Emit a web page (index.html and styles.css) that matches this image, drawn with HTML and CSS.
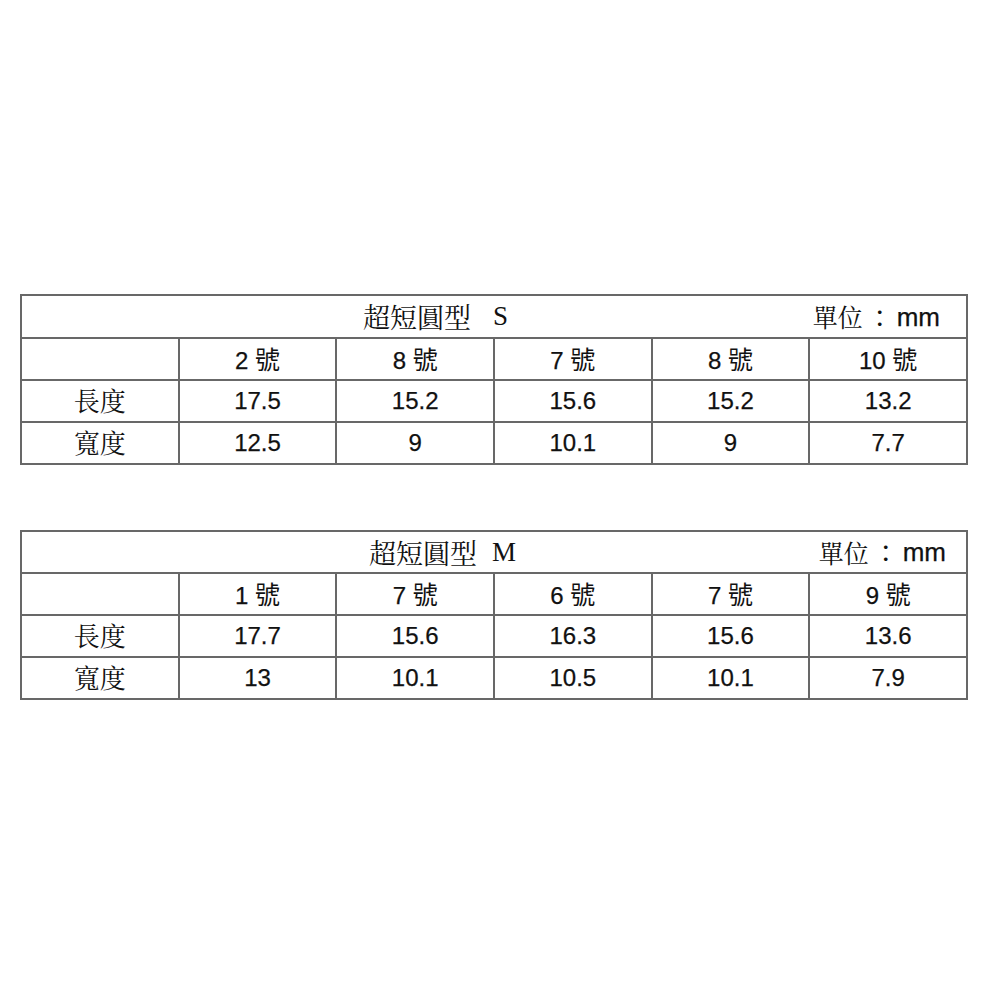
FILE: index.html
```html
<!DOCTYPE html>
<html lang="zh-Hant">
<head>
<meta charset="utf-8">
<title>超短圓型 尺寸表</title>
<link rel="stylesheet" href="styles.css">
</head>
<body>
<div class="page">
  <table class="spec">
    <tr class="title-row">
      <td colspan="6">
        <div class="title-bar title-bar-s">
          <span class="title"><span class="serif-cjk">超短圓型</span><span class="latin latin-s">S</span></span>
          <span class="unit"><span class="serif-cjk">單位</span><span class="colon">：</span><span class="mm">mm</span></span>
        </div>
      </td>
    </tr>
    <tr>
      <td></td>
      <td>2 <span class="hao">號</span></td>
      <td>8 <span class="hao">號</span></td>
      <td>7 <span class="hao">號</span></td>
      <td>8 <span class="hao">號</span></td>
      <td>10 <span class="hao">號</span></td>
    </tr>
    <tr>
      <td class="label"><span class="serif-cjk">長度</span></td>
      <td>17.5</td><td>15.2</td><td>15.6</td><td>15.2</td><td>13.2</td>
    </tr>
    <tr>
      <td class="label"><span class="serif-cjk">寬度</span></td>
      <td>12.5</td><td>9</td><td>10.1</td><td>9</td><td>7.7</td>
    </tr>
  </table>

  <table class="spec">
    <tr class="title-row title-row-m">
      <td colspan="6">
        <div class="title-bar title-bar-m">
          <span class="title"><span class="serif-cjk">超短圓型</span><span class="latin latin-m">M</span></span>
          <span class="unit"><span class="serif-cjk">單位</span><span class="colon">：</span><span class="mm">mm</span></span>
        </div>
      </td>
    </tr>
    <tr>
      <td></td>
      <td>1 <span class="hao">號</span></td>
      <td>7 <span class="hao">號</span></td>
      <td>6 <span class="hao">號</span></td>
      <td>7 <span class="hao">號</span></td>
      <td>9 <span class="hao">號</span></td>
    </tr>
    <tr>
      <td class="label"><span class="serif-cjk">長度</span></td>
      <td>17.7</td><td>15.6</td><td>16.3</td><td>15.6</td><td>13.6</td>
    </tr>
    <tr>
      <td class="label"><span class="serif-cjk">寬度</span></td>
      <td>13</td><td>10.1</td><td>10.5</td><td>10.1</td><td>7.9</td>
    </tr>
  </table>
</div>
</body>
</html>
```

FILE: styles.css
```css
html, body {
  margin: 0;
  padding: 0;
  background: #ffffff;
}

.page {
  padding: 294px 0 0 20px;
  display: flex;
  flex-direction: column;
  gap: 65px;
  font-family: "Liberation Sans", "Noto Sans CJK TC", sans-serif;
  color: #111111;
}

.spec {
  width: 948px;
  border-collapse: collapse;
  table-layout: fixed;
  font-size: 24px;
}

.spec tr {
  height: 42px;
}

.spec tr.title-row {
  height: 43px;
}

.spec tr.title-row-m {
  height: 42px;
}

.spec td {
  border: 2px solid #686868;
  padding: 0;
  text-align: center;
  vertical-align: middle;
  line-height: 1;
  white-space: nowrap;
  -webkit-text-stroke: 0.25px #111111;
}

.serif-cjk {
  font-family: "Noto Serif CJK TC", "Noto Serif CJK SC", "Noto Sans CJK TC", serif;
  font-size: 26px;
  font-weight: 400;
  -webkit-text-stroke: 0;
}

.hao {
  font-family: "Noto Sans CJK TC", sans-serif;
  font-size: 25px;
  -webkit-text-stroke: 0;
}

.title-bar {
  display: flex;
  align-items: center;
  text-align: left;
}

.title {
  display: flex;
  align-items: center;
}

.title .serif-cjk {
  font-size: 27px;
}

.latin {
  font-family: "Liberation Serif", serif;
  font-size: 27px;
  -webkit-text-stroke: 0;
}

.latin-s {
  margin-left: 22px;
}

.latin-m {
  margin-left: 15px;
}

.title-bar-s .title {
  margin-left: 341px;
}

.title-bar-m .title {
  margin-left: 347px;
}

.unit {
  margin-left: auto;
  display: flex;
  align-items: center;
}

.unit .serif-cjk {
  font-size: 25px;
}

.colon {
  font-family: "Noto Sans CJK TC", sans-serif;
  font-size: 24px;
  margin: 0 5px;
  -webkit-text-stroke: 0;
}

.mm {
  font-size: 26px;
}

.title-bar-s .unit {
  padding-right: 26px;
}

.title-bar-m .unit {
  padding-right: 20px;
}
```
